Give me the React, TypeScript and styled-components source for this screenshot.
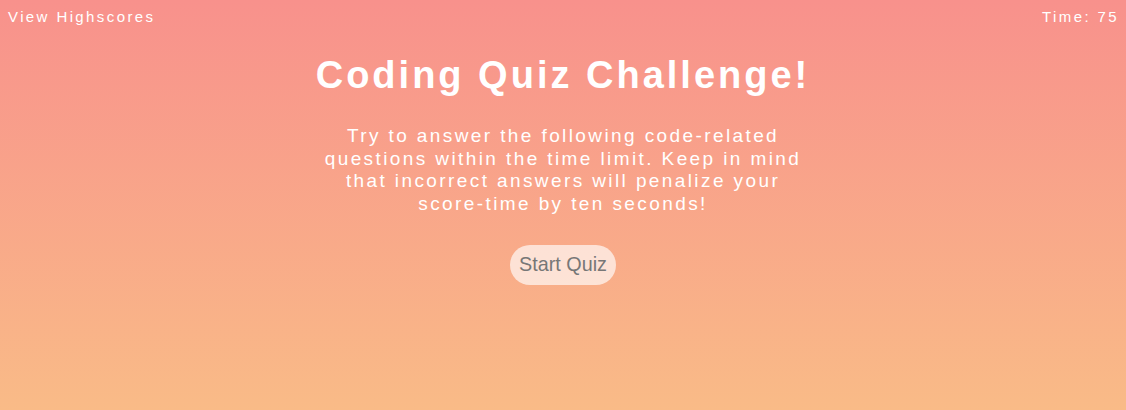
import React from "react";
import styled, { createGlobalStyle } from "styled-components";

const GlobalStyle = createGlobalStyle`
  html, body { margin: 0; padding: 0; height: 100%; }
  body {
    font-family: "Liberation Sans", Arial, sans-serif;
    background: linear-gradient(to bottom, #f8918c, #f9bb87);
    min-height: 410px;
  }
`;

const Page = styled.div`
  height: 410px;
  display: flex;
  flex-direction: column;
  color: #fff;
`;

const TopBar = styled.header`
  display: flex;
  justify-content: space-between;
  padding: 8px 7px 0 8px;
  font-size: 15px;
  letter-spacing: 2.4px;
  line-height: 17px;
`;

const TopLink = styled.a`
  color: #fff;
  text-decoration: none;
  cursor: pointer;
`;

const Main = styled.main`
  display: flex;
  flex-direction: column;
  align-items: center;
  text-align: center;
`;

const Title = styled.h1`
  margin: 28px 0 0;
  font-size: 38px;
  font-weight: 700;
  letter-spacing: 3px;
  line-height: 44px;
`;

const Intro = styled.p`
  margin: 28px 0 0;
  width: 490px;
  font-size: 19px;
  letter-spacing: 2.4px;
  line-height: 22.7px;
`;

const StartButton = styled.button`
  margin-top: 29px;
  height: 40px;
  padding: 0 9px;
  border: none;
  border-radius: 20px;
  background: rgba(255, 255, 255, 0.65);
  color: #777;
  font-family: "Liberation Sans", Arial, sans-serif;
  font-size: 19.8px;
  cursor: pointer;
`;

export default function App() {
  return (
    <>
      <GlobalStyle />
      <Page>
        <TopBar>
          <TopLink>View Highscores</TopLink>
          <span>Time: 75</span>
        </TopBar>
        <Main>
          <Title>Coding Quiz Challenge!</Title>
          <Intro>
            Try to answer the following code-related questions within the time
            limit. Keep in mind that incorrect answers will penalize your
            score-time by ten seconds!
          </Intro>
          <StartButton>Start Quiz</StartButton>
        </Main>
      </Page>
    </>
  );
}
